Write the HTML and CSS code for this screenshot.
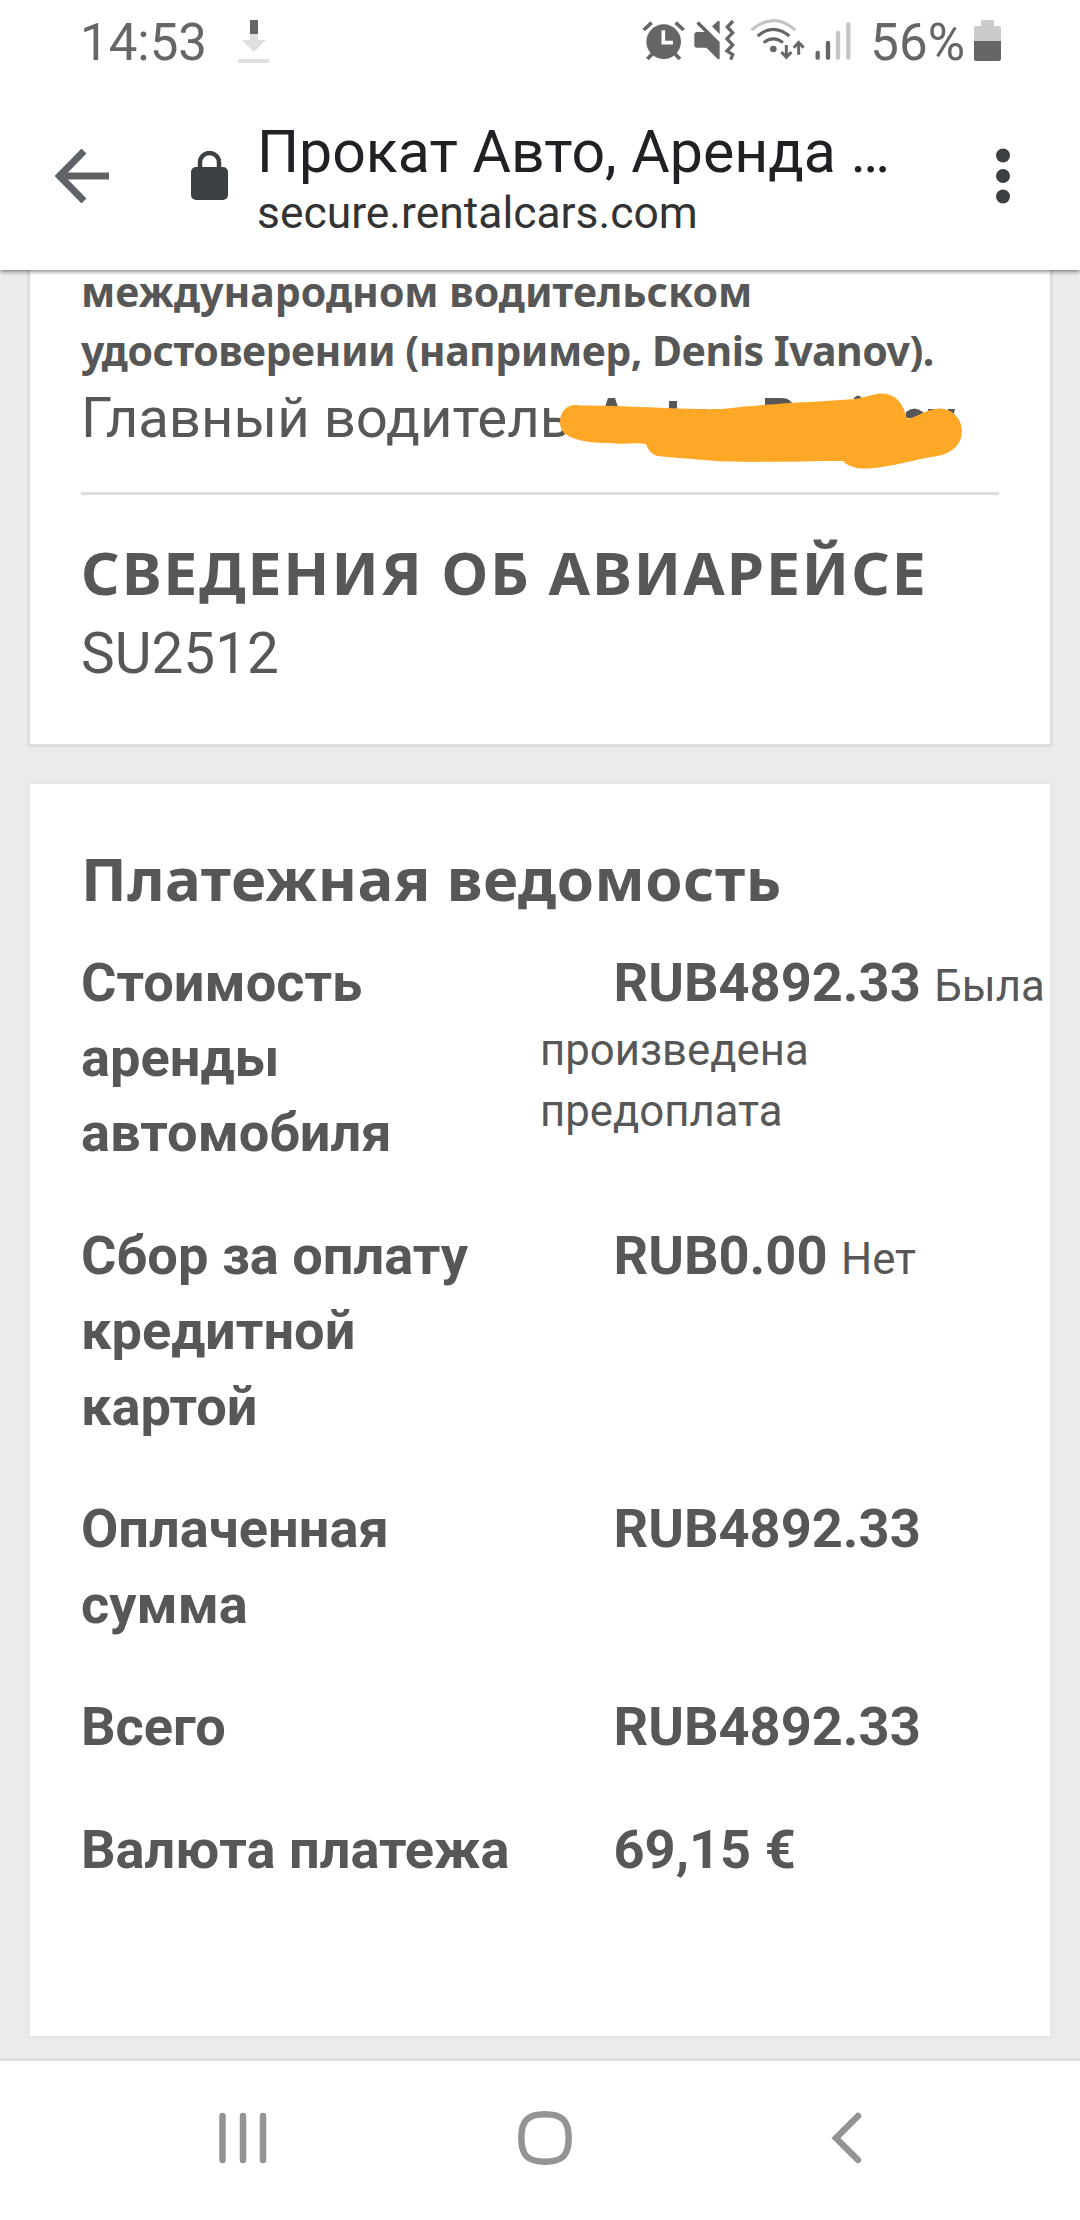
FILE: index.html
```html
<!DOCTYPE html>
<html lang="ru">
<head>
  <meta charset="UTF-8" />
  <meta name="viewport" content="width=device-width, initial-scale=1.0" />
  <title>Прокат Авто, Аренда</title>
  <link rel="stylesheet" href="styles.css">
</head>
<body>
  <div class="status-bar">
    <span class="time">14:53</span>
    <svg class="download" width="32" height="43" viewBox="0 0 32 43">
      <path fill="#dfdfdf" d="M12 14h8v6h8L16 32 4 20h8zM0 39h31v4H0z"/>
      <path fill="#666" d="M12 0h8v14h-8z"/>
    </svg>
    <div class="status-icons">
      <svg class="alarm" width="44" height="42" viewBox="127 58 132 126">
        <circle cx="192" cy="126" r="52" fill="#666"/>
        <path stroke="#666" stroke-width="11" d="M132 91l24-22M252 91l-24-22M143 178l16-16M241 178l-16-16"/>
        <path fill="none" stroke="#fff" stroke-width="11" d="M191 92v37h29"/>
      </svg>
      <svg class="mute" width="42" height="42" viewBox="282 58 126 126">
        <path fill="#666" d="M291 97h23l-25-25 7-7 63 62v52h-5l-35-35h-28q-8 0-8-8v-31q0-8 8-8zM336 80l18-16h5v40z"/>
        <path fill="none" stroke="#666" stroke-width="10" d="M399 64l-17 18 16 17-17 18 17 19-17 18 17 11-6 15"/>
      </svg>
      <svg class="wifi" width="56" height="42" viewBox="450 55 168 126">
        <g fill="none" stroke-width="9">
          <path stroke="#c3c3c3" d="M455 91q66-56 131 0"/>
          <path stroke="#666" d="M473 109q47-40 95 0M491 129q29-23 58 0M559 136v36M544 157l15 16 15-16M596 165v-36M581 144l15-16 15 16"/>
        </g>
        <circle cx="520" cy="148" r="10" fill="#666"/>
      </svg>
      <svg class="signal" width="36" height="40" viewBox="645 62 108 120">
        <g stroke-width="13" stroke-linecap="round">
          <path stroke="#666" d="M653 158v14M684 128v44"/>
          <path stroke="#c5c5c5" d="M714 98v74M745 72v100"/>
        </g>
      </svg>
      <span class="percent">56%</span>
      <svg class="battery" width="27" height="41" viewBox="0 0 27 41">
        <path fill="#cbcbcb" d="M8 0h11q1 0 1 1v5h5q2 0 2 2v13H0V8q0-2 2-2h5V1q0-1 1-1z"/>
        <path fill="#666" d="M0 21h27v18q0 2-2 2H2q-2 0-2-2z"/>
      </svg>
    </div>
  </div>

  <div class="toolbar">
    <svg class="back" width="54" height="54" viewBox="0 0 54 54">
      <path fill="none" stroke="#5f6368" stroke-width="7" d="M54 27H6M29 2L4.500 27 29 52"/>
    </svg>
    <svg class="lock" width="37" height="49" viewBox="0 0 37 49">
      <path fill="none" stroke="#3c4043" stroke-width="4.500" d="M9 18v-6.500a9.500 9.500 0 0 1 19 0V18"/>
      <rect y="16" width="37" height="33" rx="5" fill="#3c4043"/>
    </svg>
    <div class="page-info">
      <div class="page-title">Прокат Авто, Аренда …</div>
      <div class="page-url">secure.rentalcars.com</div>
    </div>
    <svg class="menu" width="14" height="56" viewBox="0 0 14 56" fill="#3c4043">
      <circle cx="7" cy="7.500" r="7"/>
      <circle cx="7" cy="28" r="7"/>
      <circle cx="7" cy="48.500" r="7"/>
    </svg>
  </div>

  <div class="content">
    <div class="card driver">
      <p class="note first">международном водительском</p>
      <p class="note">удостоверении (например, Denis Ivanov).</p>
      <div class="driver-name">Главный водитель:
        <svg class="marker" width="410" height="80" viewBox="555 390 410 80">
          <path fill="#575757" d="M608 398h7l4 12h-15zM669 401h8v9h-8zM634 409h9v3h-9zM695 409h11v3h-11zM720 409h11v3h-11zM765 398h17q9 0 12 9h-29zM854 398q4-5 8 0v4h-8zM906 412q8-7 17 0v6h-17zM928 409h8v4h-8zM948 409h7l-2 8h-6z"/>
          <path fill="#ffa726" d="M560 422C560 411 568 403 580 405.500C625 405 680 410 722 409C760 404 815 402 855 399C868 397 872 394 882 393.500C896 394 903 403 907 419C920 416 926 409 940 408.500C954 409 962 420 962 432C961 446 951 453 938 456C915 459 893 467 868 468.500C857 469 849 467 843 461C800 461 750 463 715 461C695 459 675 458 658 456C652 455 648 450 646 444C635 442 625 445 610 443C595 443 583 442 573 438C564 435 560 430 560 422Z"/>
        </svg>
      </div>
      <hr>
      <h2 class="flight">СВЕДЕНИЯ ОБ АВИАРЕЙСЕ</h2>
      <div class="flight-number">SU2512</div>
    </div>

    <div class="card payment">
      <h2>Платежная ведомость</h2>
      <div class="row">
        <div class="label">Стоимость<br>аренды<br>автомобиля</div>
        <div class="value"><b>RUB4892.33 </b>Была<br>произведена<br>предоплата</div>
      </div>
      <div class="row">
        <div class="label">Сбор за оплату<br>кредитной<br>картой</div>
        <div class="value"><b>RUB0.00 </b>Нет</div>
      </div>
      <div class="row">
        <div class="label">Оплаченная<br>сумма</div>
        <div class="value"><b>RUB4892.33</b></div>
      </div>
      <div class="row">
        <div class="label">Всего</div>
        <div class="value"><b>RUB4892.33</b></div>
      </div>
      <div class="row">
        <div class="label">Валюта платежа</div>
        <div class="value"><b>69,15 €</b></div>
      </div>
    </div>
  </div>

  <div class="nav-bar">
    <svg class="recents" width="48" height="56" viewBox="0 0 48 56">
      <path stroke="#949494" stroke-width="6.500" stroke-linecap="round" d="M3.500 6v44M24 6v44M44 6v44"/>
    </svg>
    <svg class="home" width="54" height="56" viewBox="0 0 54 56">
      <path fill="none" stroke="#949494" stroke-width="6.500" d="M27 4.300c-17 0-23.700 6-23.700 23.700s6.700 23.700 23.700 23.700S50.700 45.700 50.700 28 44 4.300 27 4.300z"/>
    </svg>
    <svg class="nav-back" width="32" height="56" viewBox="0 0 32 56">
      <path fill="none" stroke="#949494" stroke-width="6.500" stroke-linecap="round" d="M27 6L5 28l22 22"/>
    </svg>
  </div>
</body>
</html>
```
FILE: styles.css
```css
* {
  box-sizing: border-box;
}
body {
  margin: 0;
  width: 1080px;
  height: 2220px;
  overflow: hidden;
  font-family: Roboto, sans-serif;
  color: #575757;
  background: #ebebeb;
}
svg {
  display: block;
  flex: none;
}

/* status bar */
.status-bar {
  position: relative;
  z-index: 2;
  display: flex;
  height: 81px;
  padding: 0 79px 0 80px;
  background: #fff;
  color: #666;
  font-size: 51px;
  line-height: 85px;
}
.download {
  margin: 20px 0 0 31px;
}
.status-icons {
  display: flex;
  margin-left: auto;
}
.alarm,
.mute {
  margin-top: 19px;
}
.mute {
  margin-left: 8px;
}
.wifi {
  margin: 18px 0 0 14px;
}
.signal {
  margin: 21px 0 0 9px;
}
.percent {
  margin-left: 19px;
}
.battery {
  margin: 20px 0 0 9px;
}

/* browser toolbar */
.toolbar {
  position: relative;
  z-index: 1;
  display: flex;
  align-items: center;
  height: 189px;
  padding: 0 70px 0 55px;
  background: #fff;
  box-shadow: 0 1px 5px rgba(0,0,0,0.6);
}
.lock {
  margin-left: 82px;
}
.page-info {
  flex: 1;
  padding-top: 5px;
  margin-left: 29px;
  white-space: nowrap;
}
.page-title {
  font-size: 59px;
  line-height: 70px;
  color: #202124;
}
.page-url {
  font-size: 44.4px;
  line-height: 53px;
  color: #333;
}

/* page */
.content {
  height: 1788px;
  padding: 0 27px;
}
.card {
  background: #fff;
  border: 3px solid #e7e7e7;
  padding: 0 51px;
}
.driver {
  height: 477px;
  border-color: #ddd;
  border-top: 0;
}
.note {
  margin: 0;
  font-family: "Noto Sans", sans-serif;
  font-size: 41px;
  font-weight: bold;
  line-height: 59px;
  letter-spacing: -0.5px;
  white-space: nowrap;
}
.note.first {
  line-height: 43px;
  letter-spacing: 0;
  padding-bottom: 8px;
}
.driver-name {
  position: relative;
  margin-top: 1px;
  font-size: 56.3px;
  line-height: 75px;
}
/* drawn over the name */
.marker {
  position: absolute;
  left: 474px;
  top: 9px;
}
hr {
  height: 3px;
  margin: 36px 0 38px;
  border: 0;
  background: #ddd;
}
h2 {
  margin: 0;
  font-family: "Noto Sans", sans-serif;
  font-size: 60px;
  line-height: 78px;
  letter-spacing: 0.5px;
  white-space: nowrap;
}
.flight {
  letter-spacing: 2px;
}
.flight-number {
  margin-top: 5px;
  font-size: 56.7px;
  line-height: 75px;
}
.payment {
  height: 1258px;
  margin-top: 34px;
  padding-top: 55px;
}
.payment h2 {
  margin-bottom: 28px;
}
.row {
  display: grid;
  grid-template-columns: 459px 1fr;
  margin-bottom: 47.6px;
  white-space: nowrap;
}
.label,
.value b {
  font-size: 54.2px;
  font-weight: bold;
  line-height: 75.2px;
}
.value {
  font-size: 43.7px;
  line-height: 61px;
  text-indent: 73.5px;
}

/* navigation bar */
.nav-bar {
  display: flex;
  height: 162px;
  padding: 49px 0 0 219px;
  background: #fff;
  border-top: 3px solid #dedede;
}
.home {
  margin-left: 251px;
}
.nav-back {
  margin-left: 259px;
}
```
